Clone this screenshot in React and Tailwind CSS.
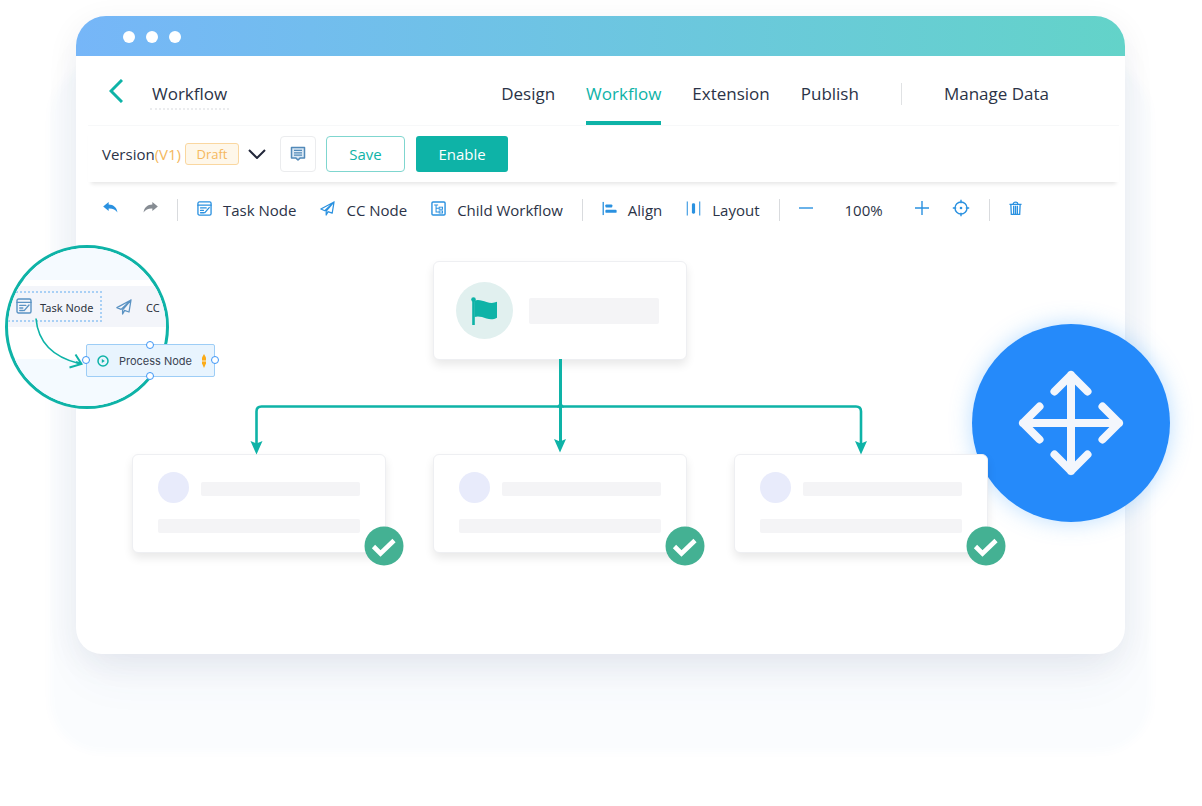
import React from "react";

const TEAL = "#0eb3a7";

function TaskIcon({ className }) {
  return (
    <svg viewBox="0 0 16 16" className={className} fill="none" stroke="currentColor" strokeWidth="1.4" strokeLinecap="round">
      <rect x="1" y="1" width="14" height="14" rx="1.5" />
      <path d="M1 4.4h14M3.8 7.4h6M3.8 10h3M3.8 12.5h3.6M13 7 8.4 12.4" />
    </svg>
  );
}

function PlaneIcon({ className }) {
  return (
    <svg viewBox="0 0 16 16" className={className} fill="none" stroke="currentColor" strokeWidth="1.3" strokeLinejoin="round" strokeLinecap="round">
      <path d="M15 1 .9 8.6l4.2 1.8L15 1l-2 12-4.6-1.6M15 1 6.6 10.8V15l1.9-3.4" />
    </svg>
  );
}

function ChildIcon({ className }) {
  return (
    <svg viewBox="0 0 16 16" className={className} fill="none" stroke="currentColor">
      <rect x="1" y="1" width="14" height="14" rx="1.2" strokeWidth="1.5" />
      <path d="M3.4 4.2h4.2M5.4 4.2v7.6h3M5.4 7.8h3" strokeWidth="1.1" />
      <rect x="8.7" y="6.6" width="3.6" height="2.2" strokeWidth="1" />
      <rect x="8.7" y="10.6" width="3.6" height="2.2" strokeWidth="1" />
    </svg>
  );
}

function AlignIcon({ className }) {
  return (
    <svg viewBox="0 0 16 16" className={className} fill="currentColor">
      <rect x="0.6" y="1" width="1.4" height="14" />
      <rect x="3.6" y="3.6" width="7.4" height="3.2" rx="1" />
      <rect x="3.6" y="9.4" width="12" height="3.2" rx="1" />
    </svg>
  );
}

function LayoutIcon({ className }) {
  return (
    <svg viewBox="0 0 16 16" className={className} fill="currentColor">
      <rect x="0.8" y="0.5" width="1.1" height="15" />
      <rect x="14.1" y="0.5" width="1.1" height="15" />
      <rect x="6.3" y="2.5" width="3.4" height="11" rx="1.4" />
    </svg>
  );
}

function TargetIcon({ className }) {
  return (
    <svg viewBox="0 0 18 18" className={className} fill="none" stroke="currentColor" strokeWidth="1.4">
      <circle cx="9" cy="9" r="6" />
      <path d="M9 .8v3.4M9 13.8v3.4M.8 9h3.4M13.8 9h3.4" />
      <circle cx="9" cy="9" r="1.3" fill="currentColor" stroke="none" />
    </svg>
  );
}

function TrashIcon({ className }) {
  return (
    <svg viewBox="0 0 14 16" className={className} fill="none" stroke="currentColor" strokeWidth="1.4">
      <path d="M.5 3.6h13M4.4 3.4c0-3 5.2-3 5.2 0M2 3.8l.5 10.6h9L12 3.8M5 5v9M7 5v9M9 5v9" />
    </svg>
  );
}

function UndoIcon({ className }) {
  return (
    <svg viewBox="0 0 16 12" className={className} fill="currentColor">
      <path d="M0 4.8 6 0v2.8c5.400.2 8.800 3.200 9.600 8.600C13.400 8 10.400 6.800 6 7v2.800z" />
    </svg>
  );
}

function Separator() {
  return <span className="h-[22px] w-px bg-[#d9dbde]" />;
}

function ToolButton({ icon: Icon, children }) {
  return (
    <button type="button" className="flex items-center gap-[11px] whitespace-nowrap">
      <Icon className="mb-1 size-[15px] text-[#2a91e0]" />
      {children}
    </button>
  );
}

function Header() {
  const tab = "flex h-full items-center border-b-4 pt-[10px]";
  return (
    <header className="mr-[6px] ml-3 flex h-[70px] items-center border-b border-[#f7f8f9] pr-[70px] pl-[21px] text-[17px] text-[#2b3347]">
      <button type="button" aria-label="Back">
        <svg viewBox="0 0 14 24" className="h-6 w-[14px]" fill="none" stroke={TEAL} strokeWidth="3">
          <path d="M13 1 2 12l11 11" />
        </svg>
      </button>
      <h1 className="mt-2 ml-[27px] border-b-2 border-dotted border-[#ebecee] px-[2px] leading-[28px]">Workflow</h1>
      <nav className="ml-auto flex h-full gap-[31px] whitespace-nowrap">
        <a href="#design" className={tab + " border-transparent"}>Design</a>
        <a href="#workflow" aria-current="page" className={tab + " border-[#0eb3a7] text-[#0eb3a7]"}>Workflow</a>
        <a href="#extension" className={tab + " border-transparent"}>Extension</a>
        <a href="#publish" className={tab + " border-transparent"}>Publish</a>
      </nav>
      <span className="mx-[42px] mt-[6px] h-[22px] w-px bg-[#e0e2e4]" />
      <a href="#data" className="mt-[6px] whitespace-nowrap">Manage Data</a>
    </header>
  );
}

function VersionBar() {
  return (
    <div className="mr-[6px] ml-3 flex h-[56px] items-center pl-[14px] text-[15px] text-[#2b3347] shadow-[0_5px_4px_-3px_rgba(0,0,0,0.10)]">
      <span>
        Version<span className="text-[#f4b860]">(V1)</span>
      </span>
      <span className="ml-1 flex h-[22px] w-[54px] items-center justify-center rounded-[3px] border border-[#fad7a0] bg-[#fef7ea] pt-px text-[13px] text-[#f5b85e]">Draft</span>
      <button type="button" aria-label="Choose version" className="ml-[9px]">
        <svg viewBox="0 0 18 10" className="h-[10px] w-[18px]" fill="none" stroke="#22273a" strokeWidth="2">
          <path d="m1 1 8 8 8-8" />
        </svg>
      </button>
      <button type="button" aria-label="Comments" className="ml-[14px] flex size-9 items-center justify-center rounded border border-[#ebecee]">
        <svg viewBox="0 0 16 16" className="mb-px size-4" fill="none" stroke="#5289b8" strokeWidth="1.5">
          <path d="M1.500 1.500h13v10.600H10l-2 1.900-2-1.900H1.500z" fill="#dbe8f4" strokeLinejoin="round" />
          <path d="M4 4.400h8M4 6.800h8M4 9.200h8" strokeWidth="1.300" />
        </svg>
      </button>
      <button type="button" className="ml-[10px] h-9 w-[79px] rounded border border-[#7fd6cf] text-[#0eb3a7]">Save</button>
      <button type="button" className="ml-[11px] h-9 w-[92px] rounded-[3px] bg-[#0eb3a7] text-white">Enable</button>
    </div>
  );
}

function Toolbar() {
  return (
    <div className="flex h-[54px] items-center gap-[19px] pt-[2px] pl-[27px] text-[15px] text-[#2b3347]">
      <div className="mb-[5px] flex items-center gap-[25px]">
        <button type="button" aria-label="Undo"><UndoIcon className="h-[11px] w-[15px] text-[#2a91e0]" /></button>
        <button type="button" aria-label="Redo"><UndoIcon className="h-[11px] w-[15px] -scale-x-100 text-[#868c93]" /></button>
      </div>
      <Separator />
      <div className="flex gap-6">
        <ToolButton icon={TaskIcon}>Task Node</ToolButton>
        <ToolButton icon={PlaneIcon}>CC Node</ToolButton>
        <ToolButton icon={ChildIcon}>Child Workflow</ToolButton>
      </div>
      <Separator />
      <div className="flex gap-6">
        <ToolButton icon={AlignIcon}>Align</ToolButton>
        <ToolButton icon={LayoutIcon}>Layout</ToolButton>
      </div>
      <Separator />
      <div className="flex items-center gap-8">
        <button type="button" aria-label="Zoom out" className="mb-1 text-[#2a91e0]">
          <svg viewBox="0 0 14 14" className="size-[14px]" stroke="currentColor" strokeWidth="1.400"><path d="M0 7h14" /></svg>
        </button>
        <span>100%</span>
        <button type="button" aria-label="Zoom in" className="mb-1 text-[#2a91e0]">
          <svg viewBox="0 0 14 14" className="size-[14px]" stroke="currentColor" strokeWidth="1.400"><path d="M0 7h14M7 0v14" /></svg>
        </button>
      </div>
      <button type="button" aria-label="Center" className="mb-1 ml-1"><TargetIcon className="size-[18px] text-[#2a91e0]" /></button>
      <Separator />
      <button type="button" aria-label="Delete" className="mb-1"><TrashIcon className="h-[15px] w-[13px] text-[#2a91e0]" /></button>
    </div>
  );
}

const cardBase = "absolute h-[99px] w-[254px] rounded-md border border-[#eeeff2] bg-white shadow-[0_5px_10px_rgba(0,0,0,0.09)]";

function StepCard({ className }) {
  return (
    <div className={cardBase + " flex flex-col gap-4 px-[25px] pt-[17px] " + className}>
      <div className="flex items-center gap-3">
        <span className="size-[31px] shrink-0 rounded-full bg-[#e8ebfb]" />
        <span className="mt-[2px] h-[14px] grow rounded-[2px] bg-[#f4f4f6]" />
      </div>
      <span className="h-[14px] rounded-[2px] bg-[#f4f4f6]" />
      <svg viewBox="0 0 40 40" className="absolute -right-[19px] -bottom-[14px] size-10">
        <circle cx="20" cy="20" r="19.500" fill="#44b193" />
        <path d="m9.500 20.500 7 7 13.500-13" fill="none" stroke="#fff" strokeWidth="4.600" />
      </svg>
    </div>
  );
}

function Canvas() {
  return (
    <div className="relative h-[418px]">
      <div className="absolute top-[88px] -right-[45px] flex size-[198px] items-center justify-center rounded-full bg-[#258afa] shadow-[0_0_22px_rgba(60,160,255,0.35)]">
        <svg viewBox="0 0 106 106" className="size-[106px]" fill="none" stroke="#f3f6fc" strokeWidth="8" strokeLinecap="round" strokeLinejoin="round">
          <path d="M53 5v96M5 53h96M36.500 21.500 53 5l16.500 16.500M36.500 84.500 53 101l16.500-16.500M21.500 36.500 5 53l16.500 16.500M84.500 36.500 101 53 84.500 69.500" />
        </svg>
      </div>

      <div className={cardBase + " top-[25px] left-[357px] flex items-center gap-4 pl-[22px]"}>
        <span className="flex size-[57px] items-center justify-center rounded-full bg-[#e1f0ef]">
          <svg viewBox="0 0 28 30" className="h-[30px] w-7" fill={TEAL}>
            <circle cx="2.500" cy="3.500" r="2.300" />
            <path d="M1.200 3h2.600v26H1.200z" />
            <path d="M3.500 4.500c4-1.500 8 .2 12 1.500 4 1.200 7 1.200 10.500-.2v16c-3.500 1.700-6.500 2-10.500.7-4.500-1.500-8-2.800-12-1.500z" />
          </svg>
        </span>
        <span className="h-[26px] w-[130px] rounded-[2px] bg-[#f4f4f6]" />
      </div>

      <StepCard className="top-[218px] left-[56px]" />
      <StepCard className="top-[218px] left-[357px]" />
      <StepCard className="top-[218px] left-[658px]" />

      <svg viewBox="0 0 800 220" className="pointer-events-none absolute top-0 left-0 h-[220px] w-[800px]" fill="none" stroke={TEAL} strokeWidth="2.600">
        <path d="M484.500 123v87" strokeWidth="3" />
        <path d="M180.500 210v-34.500q0-5 5-5h594.500q5 0 5 5V210" />
        <path d="m481 171 3.500-4 3.500 4z" strokeWidth="1" fill={TEAL} />
        <g fill={TEAL} stroke="none">
          <path d="m174.500 205 6 2.500 6-2.500-6 13.500z" />
          <path d="m478 203 6 2.500 6-2.500-6 13.500z" />
          <path d="m779 205 6 2.500 6-2.500-6 13.500z" />
        </g>
      </svg>
    </div>
  );
}

function Handle({ className }) {
  return <span className={"absolute size-2 rounded-full border border-[#3d96f7] bg-white " + className} />;
}

function Lens() {
  return (
    <div className="absolute top-[245px] left-[5px] size-[164px]">
      <div className="size-full overflow-hidden rounded-full border-[3px] border-[#0eb3a7] bg-white">
        <div className="h-8 bg-[#f5faff]" />
        <div className="mt-[6px] flex h-[41px] items-center bg-[#f3f5fa] font-['Noto_Sans','Open_Sans',sans-serif] text-[11px] whitespace-nowrap text-[#2e3440]">
          <div className="mb-px flex h-[31px] w-[94px] shrink-0 items-center gap-2 border-2 border-l-0 border-dotted border-[#a9d0f5] pl-[8px]">
            <TaskIcon className="size-4 shrink-0 text-[#5b93c3]" />
            <span className="pt-1">Task Node</span>
          </div>
          <PlaneIcon className="ml-[14px] size-4 shrink-0 text-[#5b93c3]" />
          <span className="ml-[14px] pt-1">CC</span>
        </div>
        <div className="mt-8 h-14 bg-[#f4faff]" />
      </div>
      <svg viewBox="0 0 50 54" className="absolute top-[72px] left-[28px] h-[54px] w-[50px]" fill="none" stroke={TEAL}>
        <path d="M3 1.500C5 25 20 40 46 46.500" strokeWidth="1.600" />
        <path d="M42.500 37.500 48.500 47 36.500 50.500M48.500 47 43 45" strokeWidth="2" />
      </svg>
      <div className="absolute top-[99px] left-[81px] flex h-[33px] w-[129px] items-center rounded-[2px] border border-[#9dcdf6] bg-[#e8f4fe] pl-[10px] font-['Inter',sans-serif] text-[11px] text-[#3a4352]">
        <svg viewBox="0 0 12 12" className="size-3" fill="none" stroke={TEAL} strokeWidth="1.500">
          <circle cx="6" cy="6" r="5" />
          <path d="m4.800 4 3 2-3 2z" fill={TEAL} stroke="none" />
        </svg>
        <span className="mt-px ml-[10px] whitespace-nowrap">Process Node</span>
        <svg viewBox="0 0 6 14" className="ml-[9px] h-[14px] w-[6px] shrink-0" fill="#fbab18">
          <path d="M3 0 5 3.500v6L3 14 1 9.500v-6z" />
          <path d="M1 7h4" stroke="#fff" strokeWidth=".8" />
        </svg>
        <Handle className="-top-1 left-[59px]" />
        <Handle className="-bottom-1 left-[59px]" />
        <Handle className="top-[11px] -left-[5px]" />
        <Handle className="top-[11px] -right-[5px]" />
      </div>
    </div>
  );
}

export default function App() {
  return (
    <div className="relative min-h-screen bg-white pt-4 pr-[77px] pb-[152px] pl-[76px] font-['Open_Sans','Noto_Sans',sans-serif]">
      <main className="rounded-[30px] rounded-b-[26px] bg-white shadow-[0_8px_32px_rgba(30,40,70,0.07),0_30px_50px_-10px_rgba(60,80,150,0.06),0_72px_10px_26px_rgba(60,120,220,0.025)]">
        <div className="flex h-10 items-center gap-[11px] rounded-t-[30px] bg-linear-to-r from-[#76b6f8] to-[#63d3c9] pt-[2px] pl-[47px]">
          <span className="size-3 rounded-full bg-white" />
          <span className="size-3 rounded-full bg-white" />
          <span className="size-3 rounded-full bg-white" />
        </div>
        <Header />
        <VersionBar />
        <Toolbar />
        <Canvas />
      </main>
      <Lens />
    </div>
  );
}
